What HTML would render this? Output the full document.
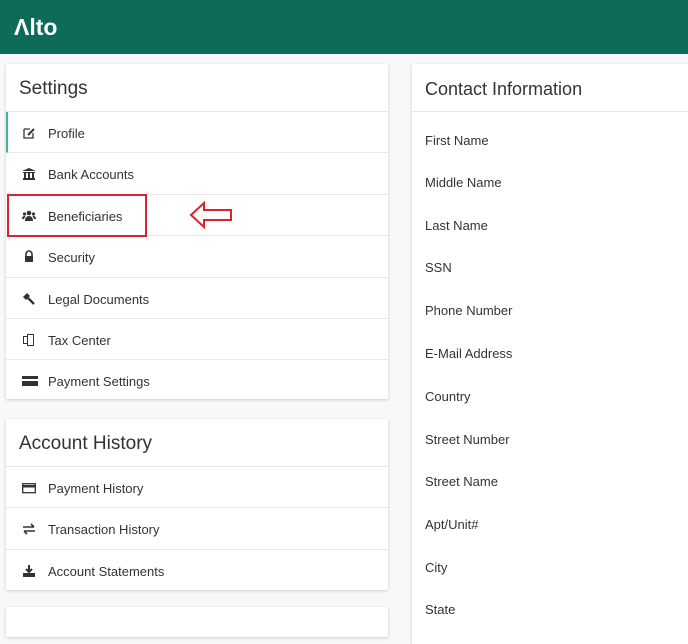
<!DOCTYPE html>
<html><head><style>
*{margin:0;padding:0;box-sizing:border-box}
body{width:688px;height:621px;overflow:hidden;background:#f8f8f8;font-family:"Liberation Sans",sans-serif;color:#333;position:relative}
.hdr{position:absolute;left:0;top:0;width:688px;height:54px;background:#0e6b5a}
.logo{position:absolute;left:14px;top:14px;color:#fff;font-weight:bold;font-size:23px}
.card{position:absolute;background:#fff;box-shadow:0 1px 3px rgba(0,0,0,.18)}
.title{height:48px;border-bottom:1px solid #e6e6e6;font-size:19px;padding:14px 0 0 13px;color:#333}
.row{height:41.4px;border-bottom:1px solid #e8e8e8;position:relative;font-size:13px;color:#333}
.row:last-child{border-bottom:none}
.row span{position:absolute;left:42px;top:14px}
.row svg{position:absolute;left:16px;top:14px}
.lbl{position:absolute;left:13px;font-size:13px;color:#333}
</style></head><body>
<div class="hdr"><div class="logo">Λlto</div></div>

<div class="card" style="left:6px;top:64px;width:382px;height:335px">
<div class="title">Settings</div>
<div class="row" style="border-left:2px solid #3bb8a0"><svg width="14" height="14" viewBox="0 0 14 14" style="left:14px"><path d="M2 3h6M2 3v9h9V7" fill="none" stroke="#333" stroke-width="1.3"/><path d="M6 9l6-6" stroke="#333" stroke-width="2"/></svg><span style="left:40px">Profile</span></div>
<div class="row"><svg width="14" height="14" viewBox="0 0 14 14"><path d="M0 4L7 1l7 3zM1 5h12v1H1zM2 6h2v5H2zM6 6h2v5H6zM10 6h2v5h-2zM1 11h12v2H1z" fill="#333"/></svg><span>Bank Accounts</span></div>
<div class="row"><svg width="14" height="14" viewBox="0 0 14 14"><circle cx="7" cy="4" r="2.3" fill="#333"/><circle cx="2.5" cy="5" r="1.6" fill="#333"/><circle cx="11.5" cy="5" r="1.6" fill="#333"/><path d="M3 12c0-3 1.5-5 4-5s4 2 4 5zM0 10c0-2 1-3 2.5-3h1L2 10zM14 10c0-2-1-3-2.5-3h-1L12 10z" fill="#333"/></svg><span>Beneficiaries</span></div>
<div class="row"><svg width="14" height="14" viewBox="0 0 14 14"><path d="M4 6V4a3 3 0 016 0v2" fill="none" stroke="#333" stroke-width="1.6"/><rect x="3" y="6" width="8" height="6" fill="#333"/></svg><span>Security</span></div>
<div class="row"><svg width="14" height="14" viewBox="0 0 14 14"><path d="M1 5l4-4 3 3-4 4z" fill="#333"/><path d="M6 6l6 6" stroke="#333" stroke-width="2.4"/></svg><span>Legal Documents</span></div>
<div class="row"><svg width="14" height="14" viewBox="0 0 14 14"><rect x="1.5" y="3.5" width="6" height="7" fill="none" stroke="#333"/><rect x="5.5" y="1.5" width="6" height="11" fill="#fff" stroke="#333"/></svg><span>Tax Center</span></div>
<div class="row"><svg width="16" height="14" viewBox="0 0 16 14"><rect x="0" y="2" width="16" height="10" fill="#333"/><rect x="0" y="5" width="16" height="2" fill="#fff"/></svg><span>Payment Settings</span></div>
</div>

<div style="position:absolute;left:7px;top:194px;width:140px;height:43px;border:2px solid #d9232e"></div>
<svg style="position:absolute;left:189px;top:201px" width="45" height="28" viewBox="0 0 45 28"><path d="M2 14L15 2v7h27v10H15v7z" fill="#fff" stroke="#d9232e" stroke-width="2"/></svg>

<div class="card" style="left:6px;top:419px;width:382px;height:171px">
<div class="title">Account History</div>
<div class="row"><svg width="14" height="14" viewBox="0 0 14 14"><rect x="0.7" y="2.7" width="12.6" height="9" fill="none" stroke="#333" stroke-width="1.3"/><rect x="1" y="4" width="12" height="2.5" fill="#333"/></svg><span>Payment History</span></div>
<div class="row"><svg width="14" height="14" viewBox="0 0 14 14"><path d="M1 5h11M9 2l3 3M13 9H2M5 12L2 9" fill="none" stroke="#333" stroke-width="1.6"/></svg><span>Transaction History</span></div>
<div class="row"><svg width="14" height="14" viewBox="0 0 14 14"><path d="M7 1v7M4 5l3 3 3-3" fill="none" stroke="#333" stroke-width="2"/><rect x="1" y="9" width="12" height="4" fill="#333"/></svg><span>Account Statements</span></div>
</div>

<div class="card" style="left:6px;top:607px;width:382px;height:30px"></div>

<div class="card" style="left:412px;top:64px;width:290px;height:580px">
<div class="title" style="font-size:18px;padding-top:15px">Contact Information</div>
<div class="lbl" style="top:69px">First Name</div>
<div class="lbl" style="top:111px">Middle Name</div>
<div class="lbl" style="top:154px">Last Name</div>
<div class="lbl" style="top:196px">SSN</div>
<div class="lbl" style="top:239px">Phone Number</div>
<div class="lbl" style="top:282px">E-Mail Address</div>
<div class="lbl" style="top:325px">Country</div>
<div class="lbl" style="top:368px">Street Number</div>
<div class="lbl" style="top:410px">Street Name</div>
<div class="lbl" style="top:453px">Apt/Unit#</div>
<div class="lbl" style="top:496px">City</div>
<div class="lbl" style="top:538px">State</div>
</div>
</body></html>
